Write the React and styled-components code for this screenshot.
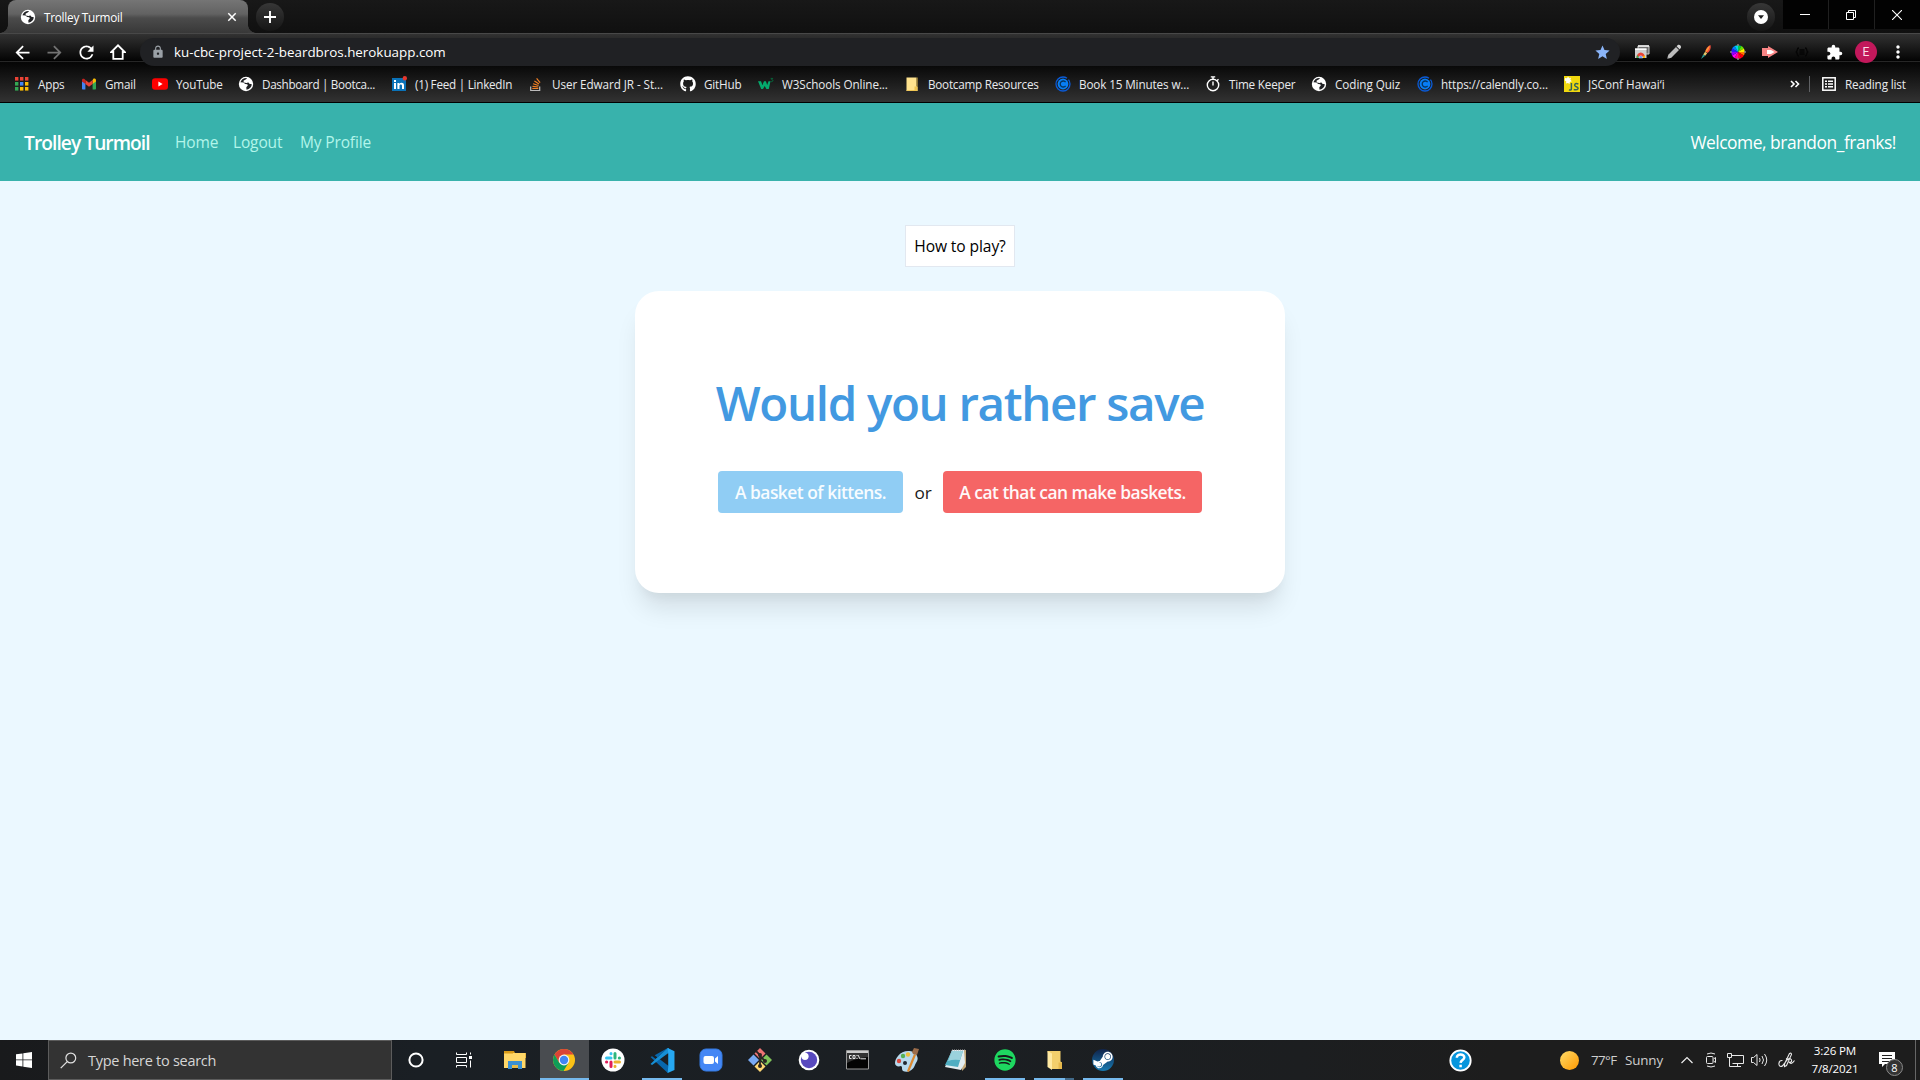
import React from 'react';
import styled, { createGlobalStyle, css } from 'styled-components';
import { MdArrowBack, MdArrowForward, MdRefresh, MdLock, MdStar, MdExtension, MdMoreVert } from 'react-icons/md';
import { FaGithub, FaSpotify, FaSteamSymbol } from 'react-icons/fa';

const GlobalStyle = createGlobalStyle`
  * { box-sizing: border-box; }
  html, body { margin: 0; padding: 0; }
  body { background: #ebf8ff; font-family: "Open Sans", "Noto Sans", sans-serif; overflow: hidden; }
  svg { display: block; flex: none; }
  button { font: inherit; border: 0; background: none; padding: 0; cursor: pointer; }
`;

const Screen = styled.div`
  width: 1920px;
  height: 1080px;
  display: flex;
  flex-direction: column;
`;

/* ---------- browser frame ---------- */
const TabStrip = styled.div`
  height: 33px;
  flex: none;
  display: flex;
  background: linear-gradient(#181818, #101010);
`;
const Tab = styled.div`
  position: relative;
  width: 240px;
  height: 33px;
  margin-left: 8px;
  padding: 1px 11px 0 12px;
  display: flex;
  align-items: center;
  border-radius: 8px 8px 0 0;
  background: linear-gradient(#757575 0, #626262 14px, #4b4b4b 18px, #383838 33px);
  color: #fff;
  &::before, &::after {
    content: '';
    position: absolute;
    bottom: 0;
    width: 8px;
    height: 8px;
  }
  &::before { left: -8px; background: radial-gradient(circle at 0 0, transparent 7.5px, #3b3b3b 8px); }
  &::after { right: -8px; background: radial-gradient(circle at 100% 0, transparent 7.5px, #3b3b3b 8px); }
`;
const TabTitle = styled.span`
  flex: 1;
  margin-left: 8px;
  font-size: 11.8px;
  letter-spacing: -0.27px;
  line-height: 16px;
`;
const RoundButton = styled.button`
  width: 28px;
  height: 28px;
  margin: ${(p) => p.$margin};
  border-radius: 50%;
  display: flex;
  align-items: center;
  justify-content: center;
  background: linear-gradient(#373737, #151515);
`;
const Spacer = styled.div`flex: 1;`;
const WindowButtons = styled.div`
  display: flex;
  gap: 1px;
  height: 29px;
  background: #202020;
`;
const WindowButton = styled.button`
  width: 45px;
  height: 29px;
  padding-right: 2px;
  background: #020202;
  display: flex;
  align-items: center;
  justify-content: center;
`;
const Chrome = styled.div`
  height: 70px;
  flex: none;
  background: linear-gradient(
    #484848 0, #484848 1px, #323232 1px, #050505 27px,
    #000 28px, #262626 28px, #262626 29px, #060606 29px,
    #090909 33px, #323232 69px, #000 69px);
`;
const Toolbar = styled.div`
  height: 33px;
  padding: 5px 0 0 12px;
  display: flex;
  align-items: center;
`;
const ToolButton = styled.button`
  width: 32px;
  height: 28px;
  flex: none;
  display: flex;
  align-items: center;
  justify-content: center;
  color: ${(p) => p.$color || '#fff'};
`;
const NavButtons = styled.div`
  display: flex;
  flex: none;
  width: 128px;
  margin-left: -6px;
`;
const AddressBar = styled.div`
  width: 1480px;
  height: 28px;
  flex: none;
  margin-left: 6px;
  padding: 0 9px 0 11px;
  border-radius: 14px;
  background: #202124;
  display: flex;
  align-items: center;
  color: #9aa0a6;
`;
const Url = styled.span`
  flex: 1;
  margin-left: 9px;
  color: #fff;
  font-size: 13.4px;
  letter-spacing: -0.01px;
  line-height: 18px;
`;
const Extensions = styled.div`
  display: flex;
  flex: none;
  margin-left: 6px;
`;
const Avatar = styled.span`
  width: 22px;
  height: 22px;
  border-radius: 50%;
  background: #c2185b;
  color: #fbdce8;
  font: 12px/22px Roboto, sans-serif;
  text-align: center;
`;
const Bookmarks = styled.div`
  height: 37px;
  padding: 0 13px 2px 14px;
  display: flex;
  align-items: center;
  color: #e9eaed;
`;
const Bookmark = styled.div`
  width: ${(p) => p.$w}px;
  height: 35px;
  display: flex;
  align-items: center;
  gap: 8px;
  white-space: nowrap;
  font-size: 11.7px;
  letter-spacing: ${(p) => p.$ls ?? -0.2}px;
`;
const Divider = styled.div`
  width: 1px;
  height: 16px;
  margin: 0 11px 0 9px;
  background: #5f6164;
`;

/* ---------- page ---------- */
const Navbar = styled.nav`
  height: 78px;
  flex: none;
  padding: 0 24px;
  display: flex;
  align-items: center;
  background: #38b2ac;
  color: #fff;
  white-space: nowrap;
`;
const Brand = styled.span`
  width: 151px;
  font-size: 19.2px;
  font-weight: 600;
  letter-spacing: -0.95px;
`;
const NavLink = styled.a`
  width: ${(p) => p.$w}px;
  color: #b2f5ea;
  font-size: 15.5px;
  letter-spacing: -0.15px;
`;
const Welcome = styled.span`
  margin-left: auto;
  font-size: 17.4px;
  letter-spacing: -0.46px;
`;
const Main = styled.main`
  flex: 1;
  display: flex;
  flex-direction: column;
  align-items: center;
  padding-top: 44px;
  background: #ebf8ff;
`;
const HelpButton = styled.button`
  width: 110px;
  height: 42px;
  flex: none;
  border: 1px solid #e2e8f0;
  background: #fff;
  color: #000;
  font-size: 15.6px;
  letter-spacing: -0.1px;
  white-space: nowrap;
`;
const Card = styled.section`
  width: 650px;
  height: 302px;
  margin-top: 24px;
  padding-top: 76px;
  border-radius: 24px;
  background: #fff;
  box-shadow: 0 20px 25px -5px rgba(0, 0, 0, 0.1), 0 10px 10px -5px rgba(0, 0, 0, 0.04);
  display: flex;
  flex-direction: column;
  align-items: center;
`;
const Question = styled.h1`
  margin: 0;
  height: 104px;
  color: #4299e1;
  font-size: 47.5px;
  font-weight: 600;
  letter-spacing: -1.35px;
  line-height: 72px;
  white-space: nowrap;
`;
const Choices = styled.div`
  display: flex;
  align-items: center;
  font-size: 17.2px;
  color: #1a1a1a;
`;
const Or = styled.span`
  width: 40px;
  text-align: center;
  letter-spacing: -0.3px;
`;
const Choice = styled.button`
  width: ${(p) => p.$w}px;
  height: 42px;
  border-radius: 4px;
  background: ${(p) => p.$bg};
  color: ${(p) => p.$color};
  font-size: 17.4px;
  font-weight: 600;
  letter-spacing: -0.5px;
  white-space: nowrap;
`;

/* ---------- taskbar ---------- */
const Taskbar = styled.footer`
  height: 40px;
  flex: none;
  display: flex;
  background: linear-gradient(90deg, #191a1c 0, #1a1f24 420px, #1b1f23 900px, #1c1e20 1300px, #1d1d1d 1500px);
  color: #fff;
`;
const TaskCell = styled.button`
  position: relative;
  width: ${(p) => p.$w || 48.95}px;
  height: 40px;
  flex: none;
  display: flex;
  align-items: center;
  justify-content: center;
  ${(p) => p.$active && css`
    background: #494c50;
  `}
  ${(p) => p.$running && css`
    &::after {
      content: '';
      position: absolute;
      bottom: 0;
      left: ${p.$active ? 0 : 4.5}px;
      right: ${p.$active ? 0 : 4.5}px;
      height: 2px;
      background: ${p.$stacked ? 'linear-gradient(90deg, #76b9ed 31px, #426a8a 31px)' : '#76b9ed'};
    }
  `}
`;
const TaskApps = styled.div`
  display: flex;
  margin-left: 3px;
`;
const SearchBox = styled.div`
  width: 344px;
  height: 40px;
  padding-left: 11px;
  border: 1px solid #5c5c5c;
  background: #333;
  color: #d6d6d6;
  display: flex;
  align-items: center;
  gap: 11px;
  font-size: 14.5px;
  letter-spacing: -0.28px;
`;
const Weather = styled.div`
  display: flex;
  align-items: center;
  width: 115px;
  font-size: 13.4px;
  color: #cfcfcf;
  white-space: nowrap;
`;
const Temperature = styled.span`
  width: 34px;
  margin-left: 12px;
  letter-spacing: -0.6px;
`;
const Condition = styled.span`
  letter-spacing: -0.15px;
`;
const Clock = styled.div`
  width: 64px;
  padding-top: 2px;
  text-align: center;
  font-size: 11.6px;
  letter-spacing: -0.15px;
  line-height: 18px;
  white-space: nowrap;
`;
const Notice = styled.div`
  position: relative;
  width: 48px;
  height: 40px;
  padding: 12px 0 0 12px;
`;
const Badge = styled.span`
  position: absolute;
  left: 19px;
  top: 19px;
  width: 17px;
  height: 17px;
  border: 1px solid #8a8a8a;
  border-radius: 50%;
  background: #333;
  font-size: 11px;
  line-height: 15px;
  text-align: center;
`;
const ShowDesktop = styled.div`
  width: 5px;
  height: 40px;
  border-left: 1px solid #666;
`;

/* ---------- icons ---------- */
const Svg = ({ s = 16, w, h, vb, children }) => (
  <svg width={w || s} height={h || s} viewBox={vb || `0 0 ${w || s} ${h || s}`} fill="none">{children}</svg>
);
const Globe = () => (
  <Svg>
    <circle cx="8" cy="8" r="7.2" fill="#fff" />
    <path d="M8.8 2.1C6 1.900 3.400 3.500 2.400 6.300l3 .200 1.800 1.600 2.100.200.500 1.200-1.500 1.800.200 2.400c3.200-.500 5.100-2.800 5.300-5.500l-2.500-.400-.700-1.200-2.600-.100-1.400-1.200 1.600-.800Z" fill="#202124" />
    <path d="m5.500 4.700 3.400-2 .500 2.100 2.600-.200.400 1.900-2.500-.500-1.100 1-3-.400Z" fill="#fff" />
  </Svg>
);
const AppsIcon = () => {
  const colors = ['#ea4335', '#ea4335', '#ea4335', '#34a853', '#4285f4', '#fbbc04', '#34a853', '#fbbc04', '#fbbc04'];
  return (
    <Svg>{colors.map((c, i) => <rect key={i} x={1 + (i % 3) * 5} y={1 + Math.floor(i / 3) * 5} width="3.4" height="3.6" fill={c} />)}</Svg>
  );
};
const GmailIcon = () => (
  <Svg>
    <path d="M1 5v7.4c0 .6.4 1 1 1h2.4V7Z" fill="#4285f4" />
    <path d="M15 5v7.4c0 .6-.4 1-1 1h-2.4V7Z" fill="#34a853" />
    <path d="M11.6 4.2V8L15 5.4V4.2c0-1.5-1.6-2.2-2.7-1.4Z" fill="#fbbc04" />
    <path d="M4.4 8V4L8 6.8 11.6 4v4L8 10.7Z" fill="#ea4335" />
    <path d="M1 4.2v1.2L4.4 8V4l-.7-.8C2.5 2.4 1 2.9 1 4.2Z" fill="#c5221f" />
  </Svg>
);
const YouTubeIcon = () => (
  <Svg><rect y="2.2" width="16" height="11.6" rx="3" fill="#f00" /><path d="m6.4 5.5 4.2 2.5-4.2 2.5Z" fill="#fff" /></Svg>
);
const LinkedInIcon = () => (
  <Svg>
    <path d="M1 2h14v13H1Z" fill="#0a72b8" />
    <path d="M3 7h2v6H3Zm0-3h2v2H3Zm3.4 3h2v.9C9.6 6.2 13 6.500 13 9.300V13h-2V9.800c0-1.600-2.500-1.600-2.500 0V13H6.400Z" fill="#fff" />
    <circle cx="13.800" cy="2.200" r="2.200" fill="#e5372e" />
  </Svg>
);
const StackIcon = () => (
  <Svg>
    <path d="M2.700 10.500v4h9v-4" stroke="#bcbbbb" strokeWidth="1.200" />
    <path d="M4.300 12.500h6M4.500 10.300l5.800.700M5.100 7.700l5.400 1.800M6.400 5l4.600 3M8.600 2.400l3.500 4.200" stroke="#f48024" strokeWidth="1.200" />
  </Svg>
);
const W3Icon = () => (
  <Svg>
    <path d="M0 5.200h3L4.400 9 6 5.200h1.900L9.200 9l1.300-3.800h2L10.800 13H8.400L6.700 9.900 5 13H3.200Z" fill="#04aa6d" />
    <path d="M12.700 2.400h2l-1 1.200c2 .2 1.500 2.500-1 2" stroke="#04713f" strokeWidth=".9" />
  </Svg>
);
const FolderNote = ({ s = 16 }) => (
  <Svg s={s} vb="0 0 16 16">
    <path d="M2.500 1.500h10v9l1 .500v4h-11Z" fill="#ffe38e" />
    <path d="M10.500 14v-3.500h2.200v-9h.800V15h-11v-.700Z" fill="#efc451" />
  </Svg>
);
const OpenFolder = () => (
  <Svg s={22}>
    <path d="M4.500 2h13v10.500l1.500 1V20H8Z" fill="#f3cf6c" />
    <path d="M4.500 2 9 4.500V21l-4.500-3Z" fill="#ffe9a2" />
    <path d="M15.500 20v-6.500h3.500V20Z" fill="#e6b84c" />
  </Svg>
);
const CalendlyIcon = () => (
  <Svg>
    <circle cx="8" cy="8" r="7" stroke="#0a5bd9" strokeWidth="1.300" strokeDasharray="37 2" />
    <circle cx="8" cy="8" r="5.400" fill="#087ef5" />
    <path d="M10.600 6.200a3 3 0 1 0 0 3.600" stroke="#05345f" strokeWidth="1.300" />
  </Svg>
);
const TimerIcon = () => (
  <Svg>
    <circle cx="8" cy="9" r="5.700" stroke="#fff" strokeWidth="1.400" />
    <path d="M5.800.900h4.400M8 1v2.600M12 4.700l1.500-1.500M8 5.500V9.400" stroke="#fff" strokeWidth="1.400" />
  </Svg>
);
const JsConfIcon = () => (
  <Svg>
    <path d="M0 0h16v16H0Z" fill="#f0d80e" />
    <path d="m1 2 2 .300L4 .500l1.200 1.700L7 1.800l-.600 2 1.400 1.400-2 .700-.200 2-1.700-1-1.900.700.300-2L.800 4.500Z" fill="#fffef0" />
    <path d="M7.400 7v5.400c0 1.700-1 2-2.500 1.500M14.400 8c-4-1.600-4.800 2-2.200 2.700 3.200.900 2.200 3.900-2.500 2.800" stroke="#34645c" strokeWidth="1.500" />
  </Svg>
);
const ReadingIcon = () => (
  <Svg>
    <rect x="1.800" y="1.800" width="12.400" height="12.400" stroke="#fff" strokeWidth="1.500" />
    <path d="M4 5.200h2M4 8h2M4 10.800h2M7 5.200h5M7 8h5M7 10.800h5" stroke="#fff" strokeWidth="1.500" />
  </Svg>
);
const HomeIcon = () => (
  <Svg><path d="M3.300 14.800h9.400V8h2L8 1.300 1.300 8h2Z" stroke="#fff" strokeWidth="1.800" /></Svg>
);
const ScreenshotIcon = () => (
  <Svg>
    <path d="M4 2h11v8H4Z" fill="#6f6f6f" stroke="#cfcfcf" />
    <path d="M4 2h11" stroke="#f5f5f5" strokeWidth="1.500" />
    <path d="M1 4.500h11.500v9.500H1Z" fill="#cfcfcf" />
    <path d="M1 5.200h11.500" stroke="#fff" strokeWidth="1.500" />
    <path d="M2.500 14a4.300 5.500 0 0 1 8.600 0Z" fill="#ea4335" />
    <path d="M2.500 14a5 5 0 0 1 .600-3l2.500 3Z" fill="#34a853" />
    <path d="M11.100 14a5 5 0 0 0-.600-3L8 14Z" fill="#fbbc04" />
    <path d="M4.900 14a1.900 2.200 0 0 1 3.800 0Z" fill="#4285f4" stroke="#fff" strokeWidth=".500" />
  </Svg>
);
const PencilIcon = () => (
  <Svg>
    <path d="m1 15 1.300-4.300L10 3l3 3-7.700 7.700Z" fill="#bdbdbd" />
    <path d="m10.600 2.300 1.200-1.200c1.800-1 4 1.200 3 3l-1.200 1.200Z" fill="#d5d5d5" />
    <path d="m10.200 2.600 3.200 3.200" stroke="#555" strokeWidth=".700" />
    <path d="m1 15 .500-2 1.500 1.500Z" fill="#444" />
  </Svg>
);
const BrushIcon = () => (
  <Svg>
    <path d="M12.500 1C10 2 7.700 4.800 7.300 7.500L9.500 9C12 7.200 13.400 4 12.500 1Z" fill="#ef4b3a" />
    <path d="M11.800 1.500C10 3 8 5 7.300 7.500l1 .700c2-2 3.200-4.200 3.500-6.700Z" fill="#ff9b35" />
    <path d="M7.100 7.800 5.200 10.500l2 1.200L9.200 9.300Z" fill="#e6c56a" />
    <path d="M5.200 10.500 3 15l4.200-3.300Z" fill="#2d9c93" />
  </Svg>
);
const WheelIcon = () => {
  const colors = ['#f00', '#ff7a00', '#fff000', '#67e300', '#00c853', '#00d5e8', '#007bff', '#2d1bff', '#8e00ff', '#f0f', '#ff0090', '#ff003c'];
  const wheel = [7, 8, 9, 10, 11, 0, 1, 2, 3, 4, 5, 6].map((i) => colors[i]);
  const point = (i) => [8 + 6.8 * Math.sin((i * Math.PI) / 6), 8 - 6.8 * Math.cos((i * Math.PI) / 6)];
  const ordered = [...wheel].reverse().slice(2).concat([...wheel].reverse().slice(0, 2));
  return (
    <Svg>
      {ordered.map((c, i) => <path key={c} d={`M8 8L${point(i).join(' ')}A6.8 6.8 0 0 1 ${point(i + 1).join(' ')}Z`} fill={c} />)}
      <path d="M8 0v2M8 14v2M0 8h2M14 8h2" stroke="#888" strokeWidth="1.500" />
    </Svg>
  );
};
const ArrowExt = () => (
  <Svg><path d="M0 4h6V2l10 6-10 6v-2H0Z" fill="#f88585" /><path d="M5 6h4l3.500 2L9 10H5Z" fill="#fff" /></Svg>
);
const JsonIcon = () => (
  <Svg w={14} h={16}><path d="M4 4C1 4 3.500 7.500.800 8 3.500 8.500 1 12 4 12M10 4c3 0 .500 3.500 3.200 4C10.500 8.500 13 12 10 12M4.500 6h5M4.500 8h5M4.500 10h5" stroke="#050505" strokeWidth="1.300" /></Svg>
);
const WindowsIcon = () => (
  <Svg><path d="m0 2.300 6.500-.9v6.100H0Zm7.300-1L16 0v7.500H7.300ZM0 8.300h6.500v6.200L0 13.600Zm7.300 0H16V16l-8.700-1.300Z" fill="#fff" /></Svg>
);
const SearchIcon = () => (
  <Svg s={17}><circle cx="10.800" cy="6" r="4.900" stroke="#e0e0e0" strokeWidth="1.200" /><path d="m7.200 9.600-6.500 6.500" stroke="#e0e0e0" strokeWidth="1.300" /></Svg>
);
const CortanaIcon = () => <Svg><circle cx="8" cy="8" r="6.600" stroke="#fff" strokeWidth="2" /></Svg>;
const TaskViewIcon = () => (
  <Svg><path d="M.500.500v2h10v-2M.500 5.500h10v5H.500ZM.500 15.500v-2h10v2M14.500.500v2M14.500 8.500v7" stroke="#fff" /><path d="M13 4h3v3h-3Z" fill="#fff" /></Svg>
);
const ExplorerIcon = () => (
  <Svg s={24}>
    <path d="M1 3h10l1 2h11v5H1Z" fill="#d99b18" />
    <path d="M1 5h21.500v15H1Z" fill="#ffd768" />
    <path d="M1 3h9v2.500H1Z" fill="#d99b18" />
    <path d="M5 13h14v8h-4v-4H9v4H5Z" fill="#3b91d4" />
    <path d="M9 17h6v3H9Z" fill="#e9bd49" />
  </Svg>
);
const ChromeIcon = () => (
  <Svg s={24}>
    <circle cx="12" cy="12" r="11" fill="#fbc116" />
    <path d="M2.500 6.500a11 11 0 0 1 19 0H12L7.200 14.700Z" fill="#db4437" />
    <path d="M2.500 6.500A11 11 0 0 0 11.500 23l5.200-8.400L7.200 14.700Z" fill="#0f9d58" />
    <circle cx="12" cy="12" r="5.400" fill="#f5f5f5" /><circle cx="12" cy="12" r="4.200" fill="#4285f4" />
  </Svg>
);
const SlackIcon = () => (
  <Svg s={24}>
    <circle cx="12" cy="12" r="11.500" fill="#fff" />
    <g strokeWidth="3" strokeLinecap="round">
      <path d="M10 5.500v.200M5.500 10h4.500" stroke="#36c5f0" /><path d="M14 5.500V10M18.500 10h-.200" stroke="#2eb67d" />
      <path d="M14 14h4.500M14 18.500v-.200" stroke="#ecb22e" /><path d="M10 14v4.500M5.500 14h.200" stroke="#e01e5a" />
    </g>
  </Svg>
);
const CodeIcon = () => (
  <Svg s={25} vb="0 0 24 24">
    <path d="M17 0 5.500 10.500 2 7.800.500 8.600 14 21l3 3 3-5L4.500 7Z" fill="#0867ad" />
    <path d="M.500 15.400 2 16.300 18 4.500V0h-1L6 10Z" fill="#168fd5" />
    <path d="m17 0 6.500 3v18L17 24l.500-6V6Z" fill="#26a8f2" />
  </Svg>
);
const ZoomIcon = () => (
  <Svg s={24}><rect x="1" y="1" width="22" height="22" rx="6" fill="#4587f5" stroke="#357be2" /><rect x="4.500" y="8" width="10.500" height="8" rx="2" fill="#fff" /><path d="m16 10.500 3-2.500v8l-3-2.500Z" fill="#fff" /></Svg>
);
const GitIcon = () => (
  <Svg s={24}>
    <path d="m12 0 5.500 5.500-5.500 5.500-5.500-5.500Z" fill="#ef7474" /><path d="m18.500 6.500 5.500 5.500-5.500 5.500-5.500-5.500Z" fill="#80c45a" />
    <path d="m12 13 5.500 5.500L12 24l-5.500-5.500Z" fill="#ffd773" /><path d="m5.500 6.500 5.500 5.500-5.500 5.500L0 12Z" fill="#79a9f3" />
    <path d="m8 3 4 4v11M12 8l5 5" stroke="#2b2523" strokeWidth="1.800" /><circle cx="12" cy="7" r="2" fill="#2b2523" /><circle cx="12" cy="18" r="2" fill="#2b2523" /><circle cx="17" cy="13" r="2" fill="#2b2523" />
  </Svg>
);
const InsomniaIcon = () => (
  <Svg s={22}><circle cx="11" cy="11" r="10.300" fill="#fff" /><circle cx="11" cy="11" r="8.200" fill="#5849be" /><circle cx="7" cy="7.300" r="3.600" fill="#fff" /></Svg>
);
const CmdIcon = () => (
  <Svg w={24} h={20}>
    <path d="M.500.500h22v18.500H.500Z" fill="#030303" stroke="#999" /><path d="M1 1h21v2H1Z" fill="#ccc" />
    <path d="M1 3h21v4Q10 8 1 13Z" fill="#333" /><path d="M5.500 5.500h-2v3h2M7 5.500h2v3H7ZM11 5v1M11 8v1M12 5l2 4M14.500 8.800H20" stroke="#e8e8e8" />
  </Svg>
);
const PaintIcon = () => (
  <Svg s={26} vb="0 0 26 26">
    <path d="M4 9C9 2 21 3 23 9c2 4-1 6-2 9-2 6-8 8-12 6-2-2 0-4-2-5-3 1-6 0-6-3 0-2 1-5 3-7Z" fill="#b8d9ed" />
    <circle cx="5" cy="14" r="2.200" fill="#da4a3f" /><circle cx="9" cy="9" r="2.200" fill="#55b255" /><circle cx="14" cy="7.500" r="2.200" fill="#efbf3e" /><circle cx="11" cy="16" r="2" fill="#202830" />
    <path d="m13 24 7-17 2 1-7 17Z" fill="#dc8930" /><path d="m18 5 2-4 5 1-2 6-4-1Z" fill="#9b6c4a" />
  </Svg>
);
const NotepadIcon = () => (
  <Svg s={24}>
    <path d="M18 2h4v17l-4 4Z" fill="#c1a777" /><path d="M8 2h12l1 13-4 7-16-3Z" fill="#e2edf0" />
    <path d="M8 3h11l-5 16L1 17Z" fill="#4faec2" /><path d="M8 3h11l-3 9q-7-1-12 1Z" fill="#9bd2dc" /><path d="M8 2h13" stroke="#aaa" strokeDasharray="1 1" />
  </Svg>
);
const Disc = styled.span`
  width: 22px;
  height: 22px;
  border-radius: 50%;
  display: flex;
  align-items: center;
  justify-content: center;
  background: ${(p) => p.$bg};
  color: ${(p) => p.$color || '#fff'};
`;
const HelpIcon = () => (
  <Svg s={23}><circle cx="11.500" cy="11.500" r="10.200" fill="#0796dd" stroke="#fff" strokeWidth="1.800" /><path d="M7.800 8.700c0-4.500 7.700-4.200 7.500-.200-.100 2.500-3.500 2.500-3.700 5.300M11.600 15.700v2.500" stroke="#fff" strokeWidth="2.500" /></Svg>
);
const MeetIcon = () => (
  <Svg w={12} h={16}><rect x="1.500" y="4.500" width="6.500" height="7" rx="1" stroke="#e8e8e8" /><path d="m8.500 7 2-1.500v5l-2-1.500M2 2q4-2 8 0M2 14q4 2 8 0" stroke="#e8e8e8" /></Svg>
);
const NetworkIcon = () => (
  <Svg w={17} h={15}><path d="M4.500 2.500h12v8h-11M10.500 10.500v3M6 13.500h8M2.500 4.500v9H6M.500.500h4v4h-4Z" stroke="#e8e8e8" /></Svg>
);
const VolumeIcon = () => (
  <Svg w={17} h={14}><path d="M.500 4.500h2l3.500-3v11l-3.500-3h-2ZM8.500 5q1.200 2 0 4M11 3q3 4 0 8M13.500 1q4.500 6 0 12" stroke="#e8e8e8" /></Svg>
);
const PenIcon = () => (
  <Svg w={18} h={16}><path d="M6.500 12 11.500 1.500q2-1 2 1L8.500 13.500l-2 1ZM8 6.500l3.500 1.500M4.500 8.500C0 8 0 14.500 3 14.500c3 0 4-6 8-8 4 0 3 5 0 3.500 2 2 3 2 5.500-1.500" stroke="#e8e8e8" strokeWidth="1.100" /></Svg>
);

const bookmarks = [
  ['Apps', AppsIcon, 67], ['Gmail', GmailIcon, 71], ['YouTube', YouTubeIcon, 86],
  ['Dashboard | Bootca...', Globe, 153, -0.33], ['(1) Feed | LinkedIn', LinkedInIcon, 137, -0.25],
  ['User Edward JR - St...', StackIcon, 152, -0.07], ['GitHub', () => <FaGithub size={16} color="#fff" />, 78],
  ['W3Schools Online...', W3Icon, 146, -0.08], ['Bootcamp Resources', FolderNote, 151, -0.24],
  ['Book 15 Minutes w...', CalendlyIcon, 150, -0.12], ['Time Keeper', TimerIcon, 106],
  ['Coding Quiz', Globe, 106, -0.05], ['https://calendly.co...', CalendlyIcon, 147, -0.12], ['JSConf Hawai‘i', JsConfIcon, 110, 0],
];

const taskApps = [
  { icon: <ExplorerIcon /> }, { icon: <ChromeIcon />, active: true, running: true }, { icon: <SlackIcon /> },
  { icon: <CodeIcon />, running: true }, { icon: <ZoomIcon /> }, { icon: <GitIcon /> }, { icon: <InsomniaIcon /> },
  { icon: <CmdIcon /> }, { icon: <PaintIcon /> }, { icon: <NotepadIcon /> },
  { icon: <Disc $bg="#17191b" $color="#1ed760"><FaSpotify size={22} /></Disc>, running: true },
  { icon: <OpenFolder />, running: true, stacked: true },
  { icon: <Disc $bg="linear-gradient(#10234a, #1679b1)"><FaSteamSymbol size={22} /></Disc>, running: true },
];

export default function App() {
  return (
    <Screen>
      <GlobalStyle />
      <TabStrip>
        <Tab>
          <Globe />
          <TabTitle>Trolley Turmoil</TabTitle>
          <Svg s={10}><path d="m1.300 1.300 7.400 7.400M8.700 1.300 1.300 8.700" stroke="#fff" strokeWidth="1.500" /></Svg>
        </Tab>
        <RoundButton $margin="3px 0 0 8px"><Svg s={12}><path d="M6 0v12M0 6h12" stroke="#fff" strokeWidth="1.900" /></Svg></RoundButton>
        <Spacer />
        <RoundButton $margin="3px 8px 0 0"><Svg s={14}><circle cx="7" cy="7" r="7" fill="#fff" /><path d="M4 5.300h6L7 9Z" fill="#202020" /></Svg></RoundButton>
        <WindowButtons>
          <WindowButton><Svg s={10}><path d="M0 4.500h10" stroke="#fff" /></Svg></WindowButton>
          <WindowButton><Svg s={10}><path d="M.500 2.500h7v7h-7ZM2.500 2.500v-2h7v7h-2" stroke="#fff" /></Svg></WindowButton>
          <WindowButton><Svg s={10}><path d="m0 0 10 10M10 0 0 10" stroke="#fff" strokeWidth="1.100" /></Svg></WindowButton>
        </WindowButtons>
      </TabStrip>
      <Chrome>
        <Toolbar>
          <NavButtons>
            <ToolButton><MdArrowBack size={21} /></ToolButton>
            <ToolButton $color="#737373"><MdArrowForward size={21} /></ToolButton>
            <ToolButton><MdRefresh size={21} /></ToolButton>
            <ToolButton><HomeIcon /></ToolButton>
          </NavButtons>
          <AddressBar>
            <MdLock size={14} />
            <Url>ku-cbc-project-2-beardbros.herokuapp.com</Url>
            <MdStar size={17} color="#8ab4f8" />
          </AddressBar>
          <Extensions>
            <ToolButton><ScreenshotIcon /></ToolButton>
            <ToolButton><PencilIcon /></ToolButton>
            <ToolButton><BrushIcon /></ToolButton>
            <ToolButton><WheelIcon /></ToolButton>
            <ToolButton><ArrowExt /></ToolButton>
            <ToolButton><JsonIcon /></ToolButton>
            <ToolButton><MdExtension size={17} /></ToolButton>
            <ToolButton><Avatar>E</Avatar></ToolButton>
            <ToolButton><MdMoreVert size={20} /></ToolButton>
          </Extensions>
        </Toolbar>
        <Bookmarks>
          {bookmarks.map(([label, Icon, width, spacing]) => (
            <Bookmark key={label} $w={width} $ls={spacing}><Icon />{label}</Bookmark>
          ))}
          <Spacer />
          <Svg s={10}><path d="m1 2 3 3-3 3M5.500 2l3 3-3 3" stroke="#fff" strokeWidth="1.600" /></Svg>
          <Divider />
          <Bookmark $w={86} $ls={-0.15}><ReadingIcon />Reading list</Bookmark>
        </Bookmarks>
      </Chrome>
      <Navbar>
        <Brand>Trolley Turmoil</Brand>
        <NavLink $w={58}>Home</NavLink>
        <NavLink $w={67}>Logout</NavLink>
        <NavLink $w={80}>My Profile</NavLink>
        <Welcome>Welcome, brandon_franks!</Welcome>
      </Navbar>
      <Main>
        <HelpButton>How to play?</HelpButton>
        <Card>
          <Question>Would you rather save</Question>
          <Choices>
            <Choice $w={185} $bg="#90cdf4" $color="#f7fcff">A basket of kittens.</Choice>
            <Or>or</Or>
            <Choice $w={259} $bg="#f56565" $color="#fff8f8">A cat that can make baskets.</Choice>
          </Choices>
        </Card>
      </Main>
      <Taskbar>
        <TaskCell $w={48}><WindowsIcon /></TaskCell>
        <SearchBox><SearchIcon />Type here to search</SearchBox>
        <TaskCell $w={48}><CortanaIcon /></TaskCell>
        <TaskCell $w={48}><TaskViewIcon /></TaskCell>
        <TaskApps>
          {taskApps.map((app, i) => (
            <TaskCell key={i} $active={app.active} $running={app.running} $stacked={app.stacked}>{app.icon}</TaskCell>
          ))}
        </TaskApps>
        <Spacer />
        <TaskCell $w={200}><HelpIcon /></TaskCell>
        <Weather>
          <Svg s={19}>
            <defs><linearGradient id="sun" x2="1" y2="1"><stop stopColor="#ffdc68" /><stop offset="1" stopColor="#ff9800" /></linearGradient></defs>
            <circle cx="9.500" cy="9.500" r="9.500" fill="url(#sun)" />
          </Svg>
          <Temperature>77°F</Temperature><Condition>Sunny</Condition>
        </Weather>
        <TaskCell $w={24}><Svg w={12} h={8}><path d="m.500 7 5.500-5.500L11.500 7" stroke="#eee" strokeWidth="1.200" /></Svg></TaskCell>
        <TaskCell $w={24}><MeetIcon /></TaskCell>
        <TaskCell $w={24}><NetworkIcon /></TaskCell>
        <TaskCell $w={24}><VolumeIcon /></TaskCell>
        <TaskCell $w={32}><PenIcon /></TaskCell>
        <Clock>3:26 PM<br />7/8/2021</Clock>
        <Notice>
          <Svg><path d="M0 0h16v12H6l-3 3v-3H0Z" fill="#fff" /><path d="M3 3.500h10M3 6.500h10M3 9.500h7" stroke="#222" /></Svg>
          <Badge>8</Badge>
        </Notice>
        <ShowDesktop />
      </Taskbar>
    </Screen>
  );
}
